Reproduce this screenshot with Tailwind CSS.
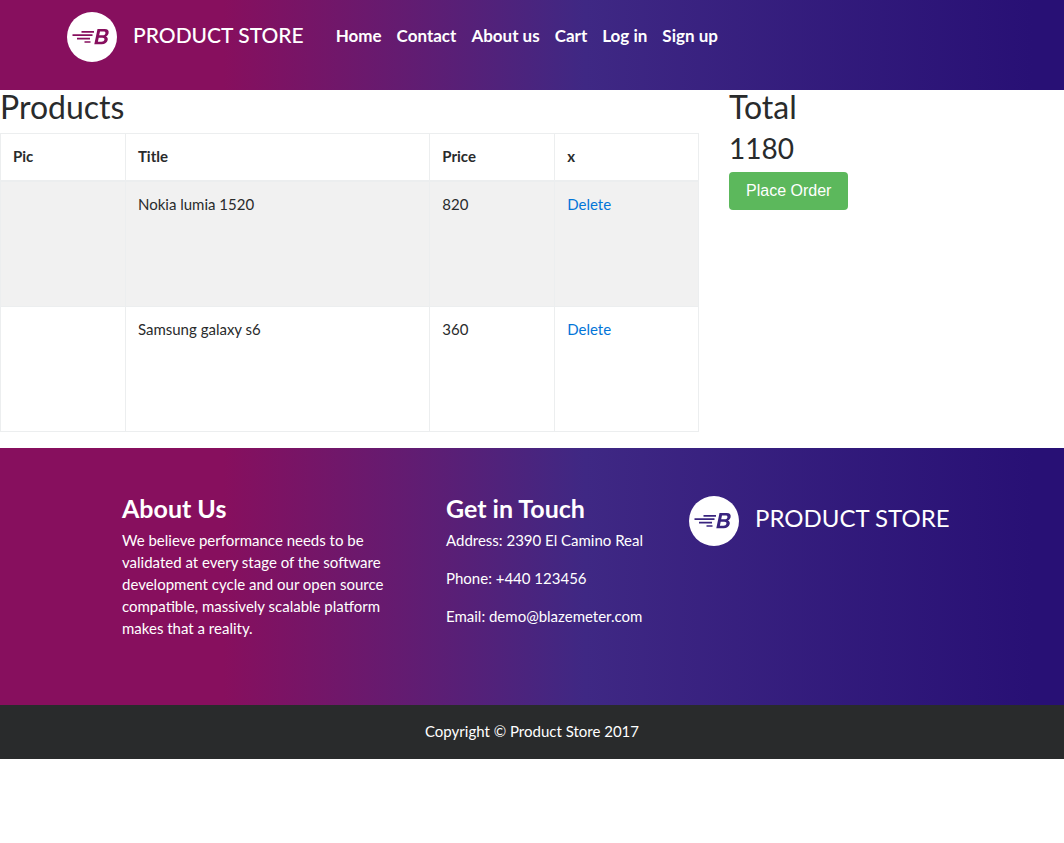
<!DOCTYPE html>
<html lang="en">
<head>
<meta charset="utf-8">
<meta name="viewport" content="width=device-width, initial-scale=1">
<title>Product Store</title>
<script src="https://cdn.jsdelivr.net/npm/@tailwindcss/browser@4"></script>
</head>
<body class="bg-white font-['Lato',sans-serif] text-[15px] leading-[22px] text-[#292b2c]">
<svg class="hidden" aria-hidden="true">
  <symbol id="logo" viewBox="0 0 50 50">
    <circle cx="25" cy="25" r="25" fill="#fff"/>
    <path fill="none" stroke="currentColor" stroke-width="1.7" d="M14.500 19.900h12.500M5.500 23.200h20M10 26.600h13M17.500 30h6"/>
    <path fill="currentColor" fill-rule="evenodd" d="M30.500 17h7.200c3 0 4.500 1.600 3.900 4.200-.4 1.600-1.300 2.700-2.700 3.200 1.600.6 2.200 1.900 1.800 3.700-.6 2.700-2.700 4.200-6 4.200h-7.400zM33 19.500l-.8 3.800h3.200c1.700 0 2.700-.6 3-1.900.2-1.300-.4-1.900-1.900-1.900zM31.700 25.800l-.8 4h3.500c1.700 0 2.700-.7 3-2s-.4-2-2.100-2z"/>
  </symbol>
</svg>

<header class="h-[90px] bg-linear-to-r/srgb from-[#870f5e] from-21% via-[#3f2884] via-55% to-[#281075] to-97% text-white">
  <div class="mx-auto flex max-w-[960px] items-start px-[15px] pt-3">
    <a href="#" class="flex items-center gap-4 text-[21px] font-medium">
      <svg class="size-[50px] text-[#870f5e]" aria-hidden="true"><use href="#logo"/></svg>
      <span class="pb-1 whitespace-nowrap">PRODUCT STORE</span>
    </a>
    <nav class="ml-8 flex h-12 items-center gap-[15px] text-[17px] font-bold whitespace-nowrap">
      <a href="#">Home</a>
      <a href="#">Contact</a>
      <a href="#">About us</a>
      <a href="#">Cart</a>
      <a href="#">Log in</a>
      <a href="#">Sign up</a>
    </nav>
  </div>
</header>

<main class="-mr-[15px] grid grid-cols-[699fr_350fr] gap-[30px]">
  <section>
    <h2 class="mb-[10px] text-[32px] leading-[33px]">Products</h2>
    <table class="w-full table-fixed border-collapse text-left leading-5">
      <colgroup><col class="w-[17.9%]"><col class="w-[43.6%]"><col class="w-[17.9%]"><col></colgroup>
      <thead>
        <tr>
          <th class="border border-b-2 border-[#eceeef] px-3 pt-3 pb-[14px] font-bold">Pic</th>
          <th class="border border-b-2 border-[#eceeef] px-3 pt-3 pb-[14px] font-bold">Title</th>
          <th class="border border-b-2 border-[#eceeef] px-3 pt-3 pb-[14px] font-bold">Price</th>
          <th class="border border-b-2 border-[#eceeef] px-3 pt-3 pb-[14px] font-bold">x</th>
        </tr>
      </thead>
      <tbody>
        <tr class="h-[125px] bg-[#f1f1f1] align-top">
          <td class="border border-[#eceeef] p-3"></td>
          <td class="border border-[#eceeef] p-3">Nokia lumia 1520</td>
          <td class="border border-[#eceeef] p-3">820</td>
          <td class="border border-[#eceeef] p-3"><a href="#" class="text-[#0275d8]">Delete</a></td>
        </tr>
        <tr class="h-[125px] align-top">
          <td class="border border-[#eceeef] p-3"></td>
          <td class="border border-[#eceeef] p-3">Samsung galaxy s6</td>
          <td class="border border-[#eceeef] p-3">360</td>
          <td class="border border-[#eceeef] p-3"><a href="#" class="text-[#0275d8]">Delete</a></td>
        </tr>
      </tbody>
    </table>
  </section>
  <section>
    <h2 class="mb-[10px] text-[32px] leading-[33px]">Total</h2>
    <h3 class="mb-2 text-[28px] leading-[31px]">1180</h3>
    <button type="button" class="h-[38px] rounded bg-[#5cb85c] px-[17px] font-['Liberation_Sans',sans-serif] text-base text-white">Place Order</button>
  </section>
</main>

<footer class="mt-4 text-white">
  <div class="bg-linear-to-r/srgb from-[#870f5e] from-21% via-[#3f2884] via-55% to-[#281075] to-97% pt-12 pb-[66px]">
    <div class="mx-auto grid max-w-[820px] grid-cols-[minmax(0,324fr)_minmax(0,243fr)_minmax(0,253fr)]">
      <section>
        <h4 class="mb-[9px] text-[25px] leading-6 font-bold">About Us</h4>
        <p class="max-w-[264px]">We believe performance needs to be validated at every stage of the software development cycle and our open source compatible, massively scalable platform makes that a reality.</p>
      </section>
      <section>
        <h4 class="mb-[9px] text-[25px] leading-6 font-bold">Get in Touch</h4>
        <div class="flex flex-col gap-4">
          <p>Address: 2390 El Camino Real</p>
          <p>Phone: +440 123456</p>
          <p>Email: demo@blazemeter.com</p>
        </div>
      </section>
      <div class="flex h-[50px] items-center gap-4 text-2xl whitespace-nowrap">
        <svg class="size-[50px] shrink-0 text-[#39247f]" aria-hidden="true"><use href="#logo"/></svg>
        <h4 class="pb-1.5">PRODUCT STORE</h4>
      </div>
    </div>
  </div>
  <p class="bg-[#292b2c] pt-[15px] pb-[17px] text-center">Copyright © Product Store 2017</p>
</footer>
</body>
</html>
